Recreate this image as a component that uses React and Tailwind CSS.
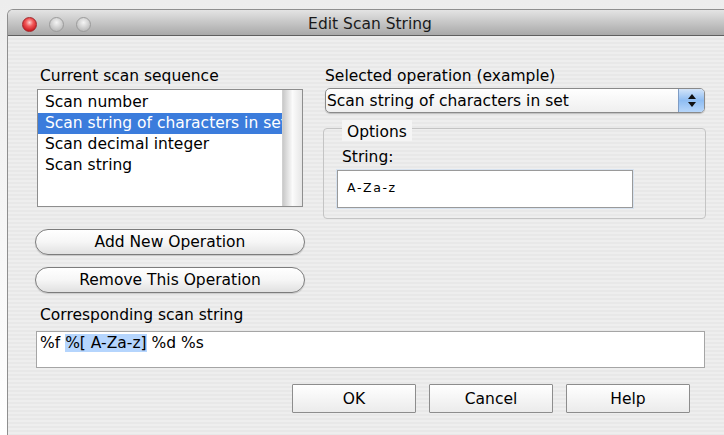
import React from "react";

const ops = [
  "Scan number",
  "Scan string of characters in set",
  "Scan decimal integer",
  "Scan string",
];

const TrafficLights = () => (
  <div className="flex items-center gap-[12px] pl-[14px]">
    <span className="w-[15px] h-[15px] rounded-full border border-[#a3262a] bg-[radial-gradient(circle_at_50%_35%,#ffd0cf_0%,#f25a5a_35%,#c8161c_80%)]" />
    <span className="w-[15px] h-[15px] rounded-full border border-[#9c9c9c] bg-[radial-gradient(circle_at_50%_35%,#f4f4f4_0%,#d3d3d3_45%,#b2b2b2_90%)]" />
    <span className="w-[15px] h-[15px] rounded-full border border-[#9c9c9c] bg-[radial-gradient(circle_at_50%_35%,#f4f4f4_0%,#d3d3d3_45%,#b2b2b2_90%)]" />
  </div>
);

const PillButton = ({ children, className }) => (
  <button
    className={
      "w-[270px] h-[26px] rounded-full border border-[#7c7c7c] bg-gradient-to-b from-white via-[#f6f6f6] to-[#e1e1e1] shadow-[0_1px_1px_rgba(0,0,0,0.15)] text-[15.5px] leading-[18px] text-black " +
      className
    }
  >
    {children}
  </button>
);

const SquareButton = ({ children }) => (
  <button className="w-[124px] h-[29px] border border-[#8d8d8d] rounded-[1px] bg-gradient-to-b from-white to-[#ebebeb] text-[15.5px] leading-[18px] text-black">
    {children}
  </button>
);

export default function App() {
  return (
    <div className="w-[724px] h-[435px] overflow-hidden bg-gradient-to-b from-[#ededed] to-white font-['DejaVu_Sans',sans-serif] text-black">
      <div className="ml-[7px] mt-[9px] w-[725px] border-l border-t border-[#8f8f8f] rounded-tl-[6px] overflow-hidden">
        {/* title bar */}
        <div className="h-[26px] pt-[3px] grid grid-cols-[1fr_auto_1fr] items-center bg-gradient-to-b from-[#e4e4e4] via-[#c6c6c6] to-[#a9a9a9] border-b border-[#5f5f5f]">
          <TrafficLights />
          <div className="text-[15.5px] leading-[18px] text-[#1a1a1a]">Edit Scan String</div>
          <div />
        </div>

        {/* dialog body */}
        <div className="h-[400px] pl-[28px] bg-[repeating-linear-gradient(to_bottom,#eeeeee_0px,#eeeeee_2px,#e8e8e8_2px,#e8e8e8_4px)]">
          <div className="flex items-start">
            {/* left column */}
            <div className="ml-[1px] w-[266px] pt-[31px]">
              <div className="pl-[3px] text-[15.5px] leading-[18px]">Current scan sequence</div>
              <div className="mt-[4px] h-[118px] border border-[#8e8e8e] bg-white flex">
                <div className="flex-1 min-w-0 pt-[2px]">
                  {ops.map((op, i) => (
                    <div
                      key={op}
                      className={
                        "h-[21px] pl-[7px] text-[15.5px] leading-[21px] whitespace-nowrap overflow-hidden " +
                        (i === 1 ? "bg-[#3b7cdc] text-white" : "")
                      }
                    >
                      {op}
                    </div>
                  ))}
                </div>
                <div className="w-[20px] border-l border-[#d0d0d0] bg-gradient-to-r from-[#c9c9c9] via-[#fbfbfb] to-[#e6e6e6]" />
              </div>
              <PillButton className="-ml-[2px] mt-[22px] block">Add New Operation</PillButton>
              <PillButton className="-ml-[2px] mt-[12px] block">Remove This Operation</PillButton>
            </div>

            {/* right column */}
            <div className="ml-[20px] w-[383px] pt-[31px]">
              <div className="pl-[2px] text-[15.5px] leading-[18px]">Selected operation (example)</div>
              <div className="ml-[2px] mt-[3px] w-[380px] h-[25px] flex rounded-[5px] border border-[#8a8a8a] bg-gradient-to-b from-white to-[#efefef] shadow-[0_1px_1px_rgba(0,0,0,0.2)] overflow-hidden">
                <div className="flex-1 pl-[1px] text-[15.5px] leading-[24px] whitespace-nowrap">
                  Scan string of characters in set
                </div>
                <div className="w-[26px] flex flex-col items-center justify-center gap-[3px] border-l border-[#7f9cc4] bg-gradient-to-b from-[#d3e4f8] via-[#8fbdf2] to-[#b7d6fa]">
                  <svg width="8" height="5" viewBox="0 0 8 5">
                    <path d="M4 0L8 5H0z" fill="#111" />
                  </svg>
                  <svg width="8" height="5" viewBox="0 0 8 5">
                    <path d="M0 0H8L4 5z" fill="#111" />
                  </svg>
                </div>
              </div>

              <fieldset className="mt-[3px] h-[103px] border border-[#c4c4c4] rounded-[4px] px-0 pb-0">
                <legend className="ml-[18px] h-[25px] pt-[4px]">
                  <span className="block h-[21px] px-[5px] pt-[3px] text-[15.5px] leading-[18px] bg-[#f5f5f5]">
                    Options
                  </span>
                </legend>
                <div className="mt-[7px] pl-[18px] text-[15.5px] leading-[18px]">String:</div>
                <div className="ml-[13px] mt-[4px] w-[296px] h-[38px] border border-[#9a9a9a] bg-white shadow-[0_0_0_1px_#d7e2ef] pl-[9px] pt-[9px] text-[12.5px] leading-[16px] tracking-[1.6px]">
                  A-Za-z
                </div>
              </fieldset>
            </div>
          </div>

          <div className="mt-[13px] pl-[4px] text-[15.5px] leading-[18px]">Corresponding scan string</div>
          <div className="mt-[7px] w-[669px] h-[37px] border border-[#a5a5a5] bg-white pl-[3px] pt-[2px] text-[15.5px] leading-[18px] whitespace-nowrap">
            %f <span className="bg-[#b5d5fd]">%[ A-Za-z]</span> %d %s
          </div>

          <div className="mt-[16px] pl-[256px] flex gap-[13px]">
            <SquareButton>OK</SquareButton>
            <SquareButton>Cancel</SquareButton>
            <SquareButton>Help</SquareButton>
          </div>
        </div>
      </div>
    </div>
  );
}
